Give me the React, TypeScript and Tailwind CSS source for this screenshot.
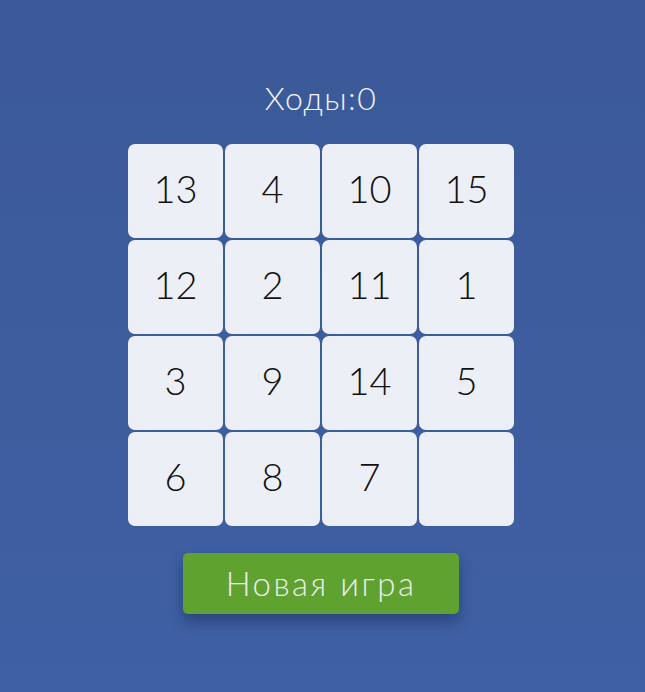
const tiles = [13, 4, 10, 15, 12, 2, 11, 1, 3, 9, 14, 5, 6, 8, 7, 0];

export default function App() {
  return (
    <div
      className="min-h-[692px] w-full flex flex-col items-center bg-gradient-to-b from-[#3b5998] to-[#3f60a4] pt-[77px]"
      style={{ fontFamily: 'Lato, "Noto Sans", sans-serif' }}
    >
      <div className="text-[32px] leading-[42px] font-light tracking-[1.5px] text-[#f3f4f8] mr-[3px]">Ходы:0</div>

      <div className="mt-[25px] grid grid-cols-[repeat(4,95px)] grid-rows-[repeat(4,94px)] gap-x-[2px] gap-y-[2px] mr-[3px]">
        {tiles.map((n, i) => (
          <div
            key={i}
            className="flex items-center justify-center pb-[5px] rounded-[7px] bg-[#eceff6] text-[38px] font-light text-[#111111]"
          >
            {n !== 0 ? n : ''}
          </div>
        ))}
      </div>

      <button className="mt-[27px] w-[276px] h-[61px] rounded-[5px] bg-[#60a22f] text-[33px] font-light tracking-[2.5px] text-[#e8eef0] shadow-[0_8px_14px_rgba(20,35,80,0.45)] mr-[3px]">
        Новая игра
      </button>
    </div>
  );
}
